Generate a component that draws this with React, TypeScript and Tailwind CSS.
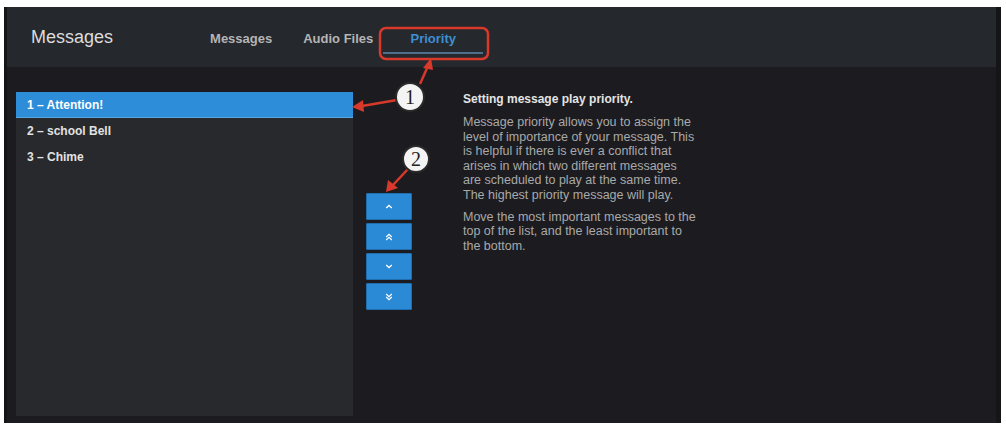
import React from "react";

const font = "font-['Liberation_Sans',Arial,sans-serif]";

function ChevronUp() {
  return (
    <svg width="8" height="5" viewBox="0 0 8 5" fill="none">
      <path d="M1.2 4 L4 1.4 L6.8 4" stroke="white" strokeWidth="1.3" />
    </svg>
  );
}
function ChevronDown() {
  return (
    <svg width="8" height="5" viewBox="0 0 8 5" fill="none">
      <path d="M1.2 1 L4 3.6 L6.8 1" stroke="white" strokeWidth="1.3" />
    </svg>
  );
}
function DoubleUp() {
  return (
    <svg width="8" height="8" viewBox="0 0 8 8" fill="none">
      <path d="M1.2 4 L4 1.4 L6.8 4" stroke="white" strokeWidth="1.2" />
      <path d="M1.2 7 L4 4.4 L6.8 7" stroke="white" strokeWidth="1.2" />
    </svg>
  );
}
function DoubleDown() {
  return (
    <svg width="8" height="8" viewBox="0 0 8 8" fill="none">
      <path d="M1.2 1 L4 3.6 L6.8 1" stroke="white" strokeWidth="1.2" />
      <path d="M1.2 4 L4 6.6 L6.8 4" stroke="white" strokeWidth="1.2" />
    </svg>
  );
}

const items = ["1 – Attention!", "2 – school Bell", "3 – Chime"];

const para1 = [
  "Message priority allows you to assign the",
  "level of importance of your message. This",
  "is helpful if there is ever a conflict that",
  "arises in which two different messages",
  "are scheduled to play at the same time.",
  "The highest priority message will play.",
];
const para2 = [
  "Move the most important messages to the",
  "top of the list, and the least important to",
  "the bottom.",
];

function Callouts() {
  const red = "#d8392b";
  return (
    <svg
      className="absolute inset-0 pointer-events-none"
      width="1006"
      height="426"
      viewBox="0 0 1006 426"
    >
      <rect x="380" y="28" width="108" height="31" rx="6" fill="none" stroke={red} strokeWidth="2.5" />
      {/* arrow to the Priority tab */}
      <line x1="420" y1="84" x2="428" y2="66" stroke={red} strokeWidth="2.5" />
      <polygon points="431,58 423,68 433,70" fill={red} />
      {/* arrow to the first list row */}
      <line x1="397" y1="100" x2="362" y2="106" stroke={red} strokeWidth="2.5" />
      <polygon points="352,107 363,100 364,112" fill={red} />
      {/* arrow to the move buttons */}
      <line x1="408" y1="169" x2="393" y2="185" stroke={red} strokeWidth="2.5" />
      <polygon points="386,192 388,180 398,188" fill={red} />
      <circle cx="410" cy="97" r="14" fill="#f4f4f4" stroke="#2a2a2a" strokeWidth="2" />
      <text x="410" y="104" textAnchor="middle" fontFamily="'Liberation Serif', serif" fontSize="20" fill="#222">1</text>
      <circle cx="416" cy="159" r="13" fill="#f4f4f4" stroke="#2a2a2a" strokeWidth="2" />
      <text x="416" y="166" textAnchor="middle" fontFamily="'Liberation Serif', serif" fontSize="20" fill="#222">2</text>
    </svg>
  );
}

export default function App() {
  return (
    <div className={`relative w-[1006px] h-[426px] bg-white pt-[7px] pl-[4px] ${font}`}>
      <div className="w-[997px] h-[416px] bg-[#1c1c20] flex flex-col border-l-[3px] border-r-[5px] border-[#151517]">
        {/* header */}
        <div className="h-[60px] shrink-0 bg-[#25282c] flex pl-[24px]">
          <div className="self-center text-[18px] text-[#dcdcdc] leading-[22px]">Messages</div>
          <div className="self-end pb-[13px] ml-[97px] flex items-end text-[13px] font-bold leading-[15px]">
            <div className="pb-[6px] border-b-2 border-transparent text-[#b5b5b5]">Messages</div>
            <div className="ml-[31px] pb-[6px] border-b-2 border-transparent text-[#b5b5b5]">Audio Files</div>
            <div className="ml-[10px] w-[100px] text-center pb-[6px] border-b-2 border-[#4d6f8c] text-[#3d8fd2]">
              Priority
            </div>
          </div>
        </div>
        {/* body */}
        <div className="flex flex-1 pl-[9px] pt-[25px] pb-[7px]">
          <div className="w-[337px] bg-[#27292d] flex flex-col">
            {items.map((t, i) => (
              <div
                key={t}
                className={`h-[26px] flex items-center px-[11px] text-[12px] font-bold ${
                  i === 0 ? "bg-[#2d8dd8] text-white border-b border-[#5aa6e0]" : "text-[#e2e2e2]"
                }`}
              >
                {t}
              </div>
            ))}
          </div>
          <div className="ml-[13px] mt-[101px] flex flex-col gap-[3px]">
            {[<ChevronUp key="a" />, <DoubleUp key="b" />, <ChevronDown key="c" />, <DoubleDown key="d" />].map(
              (icon, i) => (
                <div
                  key={i}
                  className="w-[46px] h-[27px] bg-[#2b8ad6] border border-[#1f6fb0] rounded-[1px] flex items-center justify-center"
                >
                  {icon}
                </div>
              )
            )}
          </div>
          <div className="ml-[51px] text-[12px] leading-[15px]">
            <div className="font-bold text-[#e4e4e4]">Setting message play priority.</div>
            <div className="mt-[8px] text-[12.5px] text-[#a9a9a9] leading-[14.6px]">
              {para1.map((l) => (
                <div key={l} className="whitespace-nowrap">{l}</div>
              ))}
            </div>
            <div className="mt-[7px] text-[12.5px] text-[#a9a9a9] leading-[14.8px]">
              {para2.map((l) => (
                <div key={l} className="whitespace-nowrap">{l}</div>
              ))}
            </div>
          </div>
        </div>
      </div>
      <Callouts />
    </div>
  );
}
